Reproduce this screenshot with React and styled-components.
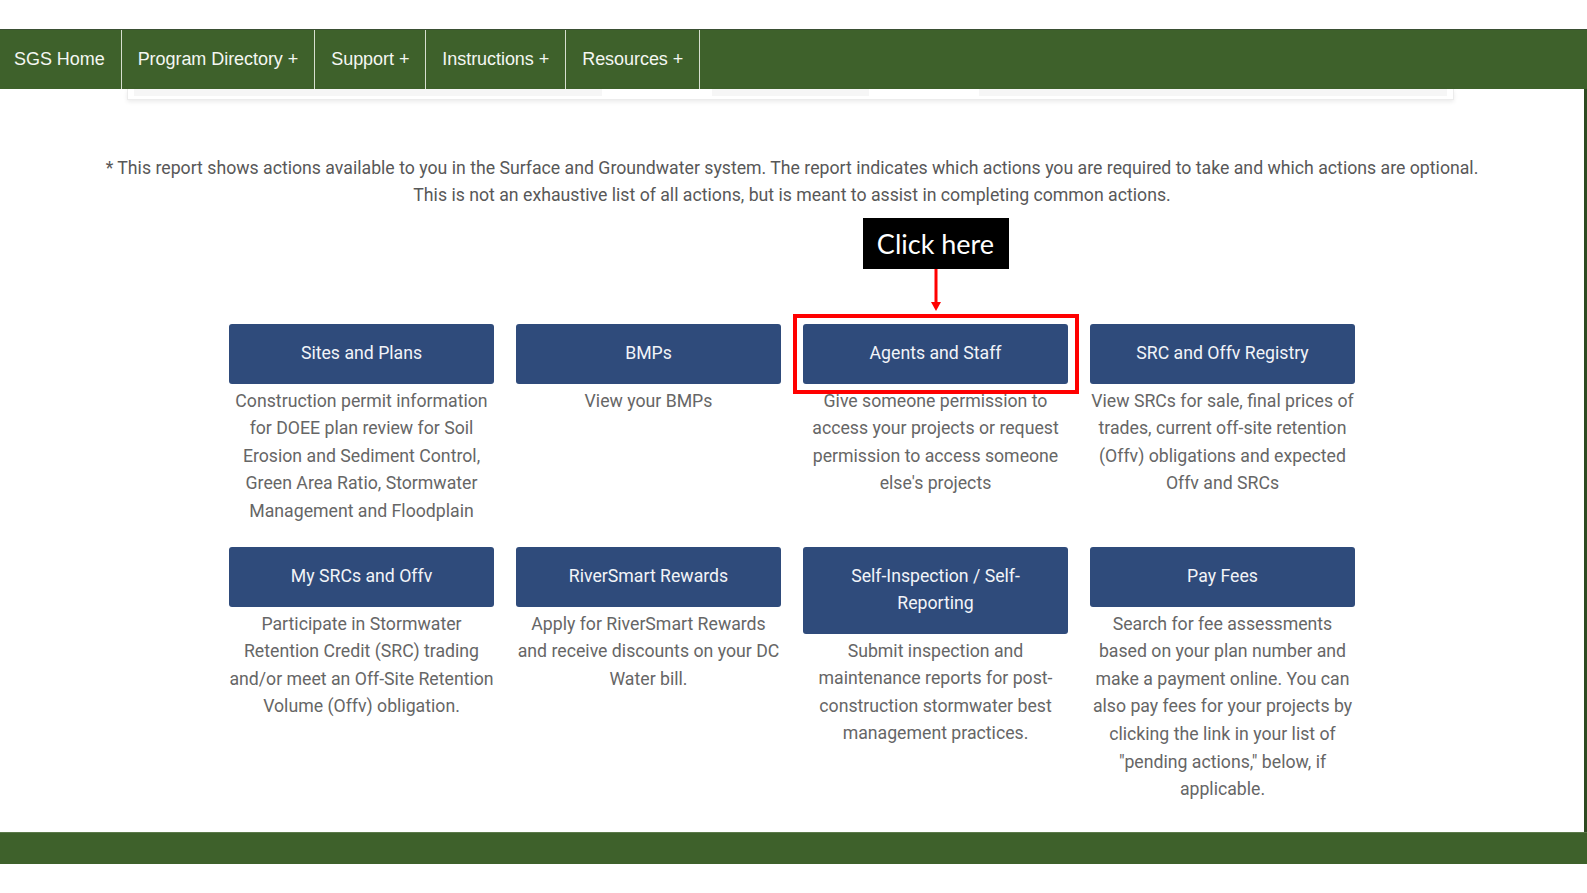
import styled, { createGlobalStyle } from 'styled-components'

const GlobalStyle = createGlobalStyle`
    html, body {
        margin: 0;
        padding: 0;
        background: #ffffff;
    }
    * {
        box-sizing: border-box;
    }
`

const Page = styled.div`
    height: 893px;
    display: grid;
    grid-template-rows: 29px 60px 1fr 32px 29px;
    background: #ffffff;
    overflow: hidden;
`
const TopGap = styled.div``

const NavBar = styled.nav`
    display: flex;
    background-color: #3e612b;
    border-top: 1px solid #3a4f33;
`
const NavItem = styled.div`
    display: flex;
    align-items: center;
    padding: 0 16px 0 ${p => (p.$first ? '14px' : '16px')};
    border-right: 1px solid #d7dfd0;
    color: #f4f7f2;
    font-family: "Liberation Sans", Arial, sans-serif;
    font-size: 18px;
    letter-spacing: -0.05px;
    white-space: nowrap;
`

const Content = styled.main`
    position: relative;
    border-right: 3px solid #2d4a20;
    display: flex;
    flex-direction: column;
    align-items: center;
`
const GhostCard = styled.div`
    align-self: stretch;
    margin: 0 130px 0 127px;
    height: 11px;
    display: flex;
    gap: 110px;
    padding: 0 6px 3px;
    background: #ffffff;
    border: 1px solid #ececec;
    border-top: none;
    box-shadow: 0 2px 4px rgba(0, 0, 0, 0.08);
`
const GhostBar = styled.div`
    flex: ${p => p.$grow};
    background: #f6f6f6;
`

const Intro = styled.p`
    margin: 55px 0 0;
    text-align: center;
    font-family: Roboto, "Noto Sans", sans-serif;
    font-size: 17.7px;
    line-height: 27.3px;
    color: #585858;
`

const Grid = styled.div`
    margin-top: 114px;
    display: grid;
    grid-template-columns: repeat(4, 265px);
    column-gap: 22px;
    row-gap: 21px;
    align-items: start;
`
const Cell = styled.div`
    position: relative;
    display: flex;
    flex-direction: column;
    align-items: stretch;
`
const ActionButton = styled.button`
    display: block;
    width: 100%;
    padding: 16.5px 12px;
    border: none;
    border-radius: 3px;
    background-color: #2f4b7b;
    color: #f2f4f8;
    font-family: Roboto, "Noto Sans", sans-serif;
    font-size: 17.7px;
    line-height: 27px;
    text-align: center;
    cursor: pointer;
`
const Desc = styled.p`
    margin: 4px -1px 0;
    text-align: center;
    font-family: Roboto, "Noto Sans", sans-serif;
    font-size: 17.7px;
    line-height: 27.6px;
    color: #666666;
`

const Highlight = styled.span`
    position: absolute;
    top: -10px;
    left: -10px;
    right: -11px;
    height: 80px;
    border: 4px solid #ff0000;
    pointer-events: none;
`
const Callout = styled.div`
    position: absolute;
    left: 50%;
    top: -106px;
    transform: translateX(-50%);
    display: flex;
    flex-direction: column;
    align-items: center;
`
const CalloutBox = styled.div`
    width: 146px;
    height: 51px;
    display: flex;
    align-items: center;
    justify-content: center;
    background: #000000;
    color: #ffffff;
    font-family: Lato, "Open Sans", sans-serif;
    font-size: 27px;
`

const Footer = styled.footer`
    background-color: #3e612b;
    border-top: 1px solid #5b7a4a;
`

const navItems = ['SGS Home', 'Program Directory +', 'Support +', 'Instructions +', 'Resources +']

const actions = [
    {
        title: 'Sites and Plans',
        desc: 'Construction permit information for DOEE plan review for Soil Erosion and Sediment Control, Green Area Ratio, Stormwater Management and Floodplain',
    },
    { title: 'BMPs', desc: 'View your BMPs' },
    {
        title: 'Agents and Staff',
        desc: "Give someone permission to access your projects or request permission to access someone else's projects",
        highlight: true,
    },
    {
        title: 'SRC and Offv Registry',
        desc: 'View SRCs for sale, final prices of trades, current off-site retention (Offv) obligations and expected Offv and SRCs',
    },
    {
        title: 'My SRCs and Offv',
        desc: 'Participate in Stormwater Retention Credit (SRC) trading and/or meet an Off-Site Retention Volume (Offv) obligation.',
    },
    {
        title: 'RiverSmart Rewards',
        desc: 'Apply for RiverSmart Rewards and receive discounts on your DC Water bill.',
    },
    {
        title: 'Self-Inspection / Self-Reporting',
        desc: 'Submit inspection and maintenance reports for post-construction stormwater best management practices.',
    },
    {
        title: 'Pay Fees',
        desc: 'Search for fee assessments based on your plan number and make a payment online. You can also pay fees for your projects by clicking the link in your list of "pending actions," below, if applicable.',
    },
]

function Arrow() {
    return (
        <svg width="12" height="43" viewBox="0 0 12 43">
            <rect x="4.5" y="0" width="3" height="35" fill="#ff0000" />
            <polygon points="1,33 11,33 6,42" fill="#ff0000" />
        </svg>
    )
}

export default function App() {
    return (
        <>
            <GlobalStyle />
            <Page>
                <TopGap />
                <NavBar>
                    {navItems.map((item, i) => (
                        <NavItem key={item} $first={i === 0}>{item}</NavItem>
                    ))}
                </NavBar>
                <Content>
                    <GhostCard>
                        <GhostBar $grow={3} />
                        <GhostBar $grow={1} />
                        <GhostBar $grow={3} />
                    </GhostCard>
                    <Intro>
                        * This report shows actions available to you in the Surface and Groundwater system. The report indicates which actions you are required to take and which actions are optional.
                        <br />
                        This is not an exhaustive list of all actions, but is meant to assist in completing common actions.
                    </Intro>
                    <Grid>
                        {actions.map(a => (
                            <Cell key={a.title}>
                                <ActionButton>{a.title}</ActionButton>
                                <Desc>{a.desc}</Desc>
                                {a.highlight && (
                                    <>
                                        <Highlight />
                                        <Callout>
                                            <CalloutBox>Click here</CalloutBox>
                                            <Arrow />
                                        </Callout>
                                    </>
                                )}
                            </Cell>
                        ))}
                    </Grid>
                </Content>
                <Footer />
                <div />
            </Page>
        </>
    )
}
